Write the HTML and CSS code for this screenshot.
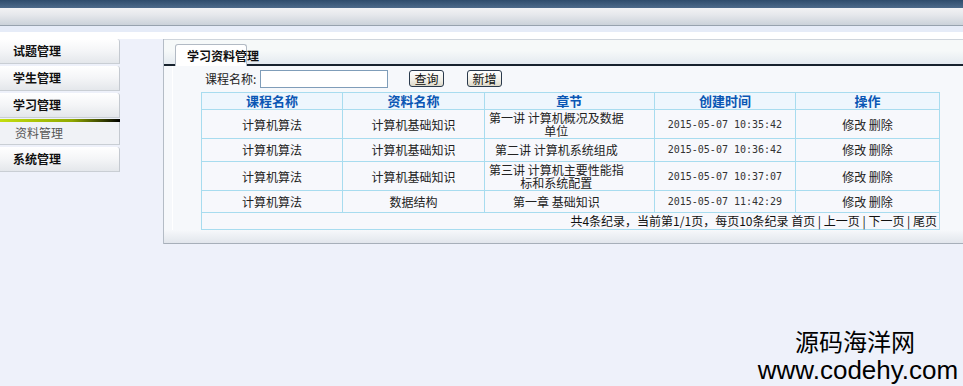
FILE: index.html
```html
<!DOCTYPE html>
<html lang="zh-CN">
<head>
  <meta charset="UTF-8" />
  <title>学习资料管理</title>
  <link rel="stylesheet" href="styles.css">
</head>
<body>
  <div class="topbar">
    <div class="topbar-dark"></div>
    <div class="topbar-grey"></div>
    <div class="topbar-strip"></div>
  </div>

  <div class="layout">
    <div class="sidebar">
      <div class="menu-btn">试题管理</div>
      <div class="menu-btn">学生管理</div>
      <div class="menu-btn">学习管理</div>
      <div class="menu-bar"></div>
      <div class="menu-sub">资料管理</div>
      <div class="menu-btn">系统管理</div>
    </div>

    <div class="panel">
      <div class="panel-head">
        <div class="tab">学习资料管理</div>
      </div>
      <div class="panel-body">
        <div class="search">
          <label for="kcmc">课程名称:</label>
          <input type="text" id="kcmc" class="search-input">
          <button class="btn btn-query">查询</button>
          <button class="btn btn-add">新增</button>
        </div>

        <table class="grid">
          <tr class="grid-head">
            <th class="c1">课程名称</th>
            <th class="c2">资料名称</th>
            <th class="c3">章节</th>
            <th class="c4">创建时间</th>
            <th class="c5">操作</th>
          </tr>
          <tr class="row-tall">
            <td>计算机算法</td>
            <td>计算机基础知识</td>
            <td class="chapter">第一讲 计算机概况及数据单位</td>
            <td class="time">2015-05-07 10:35:42</td>
            <td>修改 删除</td>
          </tr>
          <tr>
            <td>计算机算法</td>
            <td>计算机基础知识</td>
            <td class="chapter">第二讲 计算机系统组成</td>
            <td class="time">2015-05-07 10:36:42</td>
            <td>修改 删除</td>
          </tr>
          <tr class="row-tall">
            <td>计算机算法</td>
            <td>计算机基础知识</td>
            <td class="chapter">第三讲 计算机主要性能指标和系统配置</td>
            <td class="time">2015-05-07 10:37:07</td>
            <td>修改 删除</td>
          </tr>
          <tr class="row-last">
            <td>计算机算法</td>
            <td>数据结构</td>
            <td class="chapter">第一章 基础知识</td>
            <td class="time">2015-05-07 11:42:29</td>
            <td>修改 删除</td>
          </tr>
          <tr class="grid-foot">
            <td colspan="5">共4条纪录，当前第1/1页，每页10条纪录 首页 | 上一页 | 下一页 | 尾页</td>
          </tr>
        </table>
      </div>
      <div class="panel-foot"></div>
    </div>
  </div>

  <div class="watermark">
    <div class="wm-cn">源码海洋网</div>
    <div class="wm-url">www.codehy.com</div>
  </div>
</body>
</html>
```

FILE: styles.css
```css
body {
  margin: 0;
  background-color: #eef1fa;
  font-family: "Noto Sans CJK SC", "Liberation Sans", sans-serif;
  font-size: 12px;
  color: #222;
}

/* 顶部 */
.topbar-dark {
  height: 8px;
  background: linear-gradient(#2f4c6c, #4d6a8a);
}

.topbar-grey {
  height: 17px;
  background: linear-gradient(#f2f2f4, #e6e8ec 40%, #cbd2da);
  border-bottom: 1px solid #97a2ae;
}

.topbar-strip {
  height: 13px;
  background: linear-gradient(#e6ecf8 0, #e6ecf8 6px, #fff 6px);
}

.layout {
  display: flex;
  align-items: flex-start;
}

/* 左侧菜单 */
.sidebar {
  width: 120px;
}

.menu-btn {
  height: 24px;
  line-height: 24px;
  padding-left: 13px;
  margin-bottom: 2px;
  font-weight: bold;
  color: #111;
  background: linear-gradient(#ffffff, #f4f5f7 50%, #e4e7eb);
  border-right: 1px solid #c4c9d0;
  border-bottom: 1px solid #c9ced4;
  border-top-right-radius: 3px;
}

.menu-bar {
  height: 3px;
  margin-top: -1px;
  background: linear-gradient(to right, #c4de10, #90a800 60%, #3a4400 85%, #000);
}

.menu-sub {
  height: 22px;
  line-height: 22px;
  padding-left: 15px;
  margin-bottom: 2px;
  color: #555;
  background: #f0f2f6;
  border-right: 1px solid #c4c9d0;
  border-bottom: 1px solid #c9ced4;
}

/* 主面板 */
.panel {
  flex: 1;
  margin-left: 43px;
  border-left: 1px solid #b4bcc6;
  background: #f6f8fb;
}

.panel-head {
  height: 24px;
  display: flex;
  align-items: flex-end;
  padding-left: 11px;
  background: linear-gradient(#f6f9f9, #f6f9f9 45%, #e4eaf0);
  border-top: 1px solid #cfd5dc;
  border-bottom: 2px solid #17222e;
}

.tab {
  position: relative;
  box-sizing: border-box;
  width: 72px;
  height: 22px;
  line-height: 22px;
  margin-bottom: -2px;
  padding-left: 11px;
  white-space: nowrap;
  font-weight: bold;
  color: #111;
  background: #fff;
  border: 1px solid #b2bac4;
  border-bottom: none;
  border-radius: 3px 3px 0 0;
}

.panel-body {
  padding: 1px 0 0 37px;
  background: linear-gradient(to right, transparent 8px, #fff 8px, #fff 9px, transparent 9px), #f6f8fb;
}

.search {
  height: 23px;
  display: flex;
  align-items: center;
  padding-left: 4px;
}

.search label {
  width: 55px;
  color: #222;
}

.search-input {
  width: 124px;
  height: 16px;
  margin: 0;
  padding: 0 1px;
  border: 1px solid #7f9db9;
  background: #fff;
}

.btn {
  height: 17px;
  width: 35px;
  padding: 0;
  font-family: inherit;
  font-size: 12px;
  line-height: 14px;
  color: #111;
  background: linear-gradient(#ffffff, #f1efe6 60%, #dcd8c8);
  border: 1px solid #2a3a4c;
  border-radius: 3px;
}

.btn-query {
  margin-left: 21px;
}

.btn-add {
  margin-left: 23px;
}

/* 表格 */
.grid {
  width: 739px;
  margin-top: 2px;
  border-collapse: collapse;
  background: #f7f8fc;
}

.grid th,
.grid td {
  border: 1px solid #a8dcef;
  padding: 0 2px;
  text-align: center;
  line-height: 14px;
}

.grid th {
  height: 16px;
  line-height: 16px;
  color: #0a56b4;
  font-size: 13px;
  background: #eef6fd;
}

.c1 { width: 137px; }
.c2 { width: 138px; }
.c3 { width: 166px; }
.c4 { width: 137px; }
.c5 { width: 140px; }

.grid td {
  height: 22px;
}

.grid .row-tall td {
  height: 28px;
  line-height: 13px;
}

.grid .row-last td {
  height: 21px;
}

.grid td.chapter {
  padding-right: 28px;
}

.grid td.time {
  font-family: "DejaVu Sans Mono", "Liberation Mono", monospace;
  font-size: 10px;
  color: #333;
}

.grid .grid-foot td {
  height: 16px;
  text-align: right;
  color: #111;
}

.panel-foot {
  height: 13px;
  background: linear-gradient(#f6f8fb, #e2e6ec);
  border-bottom: 1px solid #a7afb9;
}

/* 水印 */
.watermark {
  position: absolute;
  right: 0;
  bottom: 4px;
  width: 210px;
  text-align: center;
  color: #000;
}

.wm-cn {
  font-family: "Noto Sans CJK SC", sans-serif;
  font-size: 24px;
  line-height: 27px;
  margin-bottom: 4px;
  padding-right: 6px;
}

.wm-url {
  font-family: "Liberation Sans", sans-serif;
  font-size: 26px;
  line-height: 24px;
}
```
